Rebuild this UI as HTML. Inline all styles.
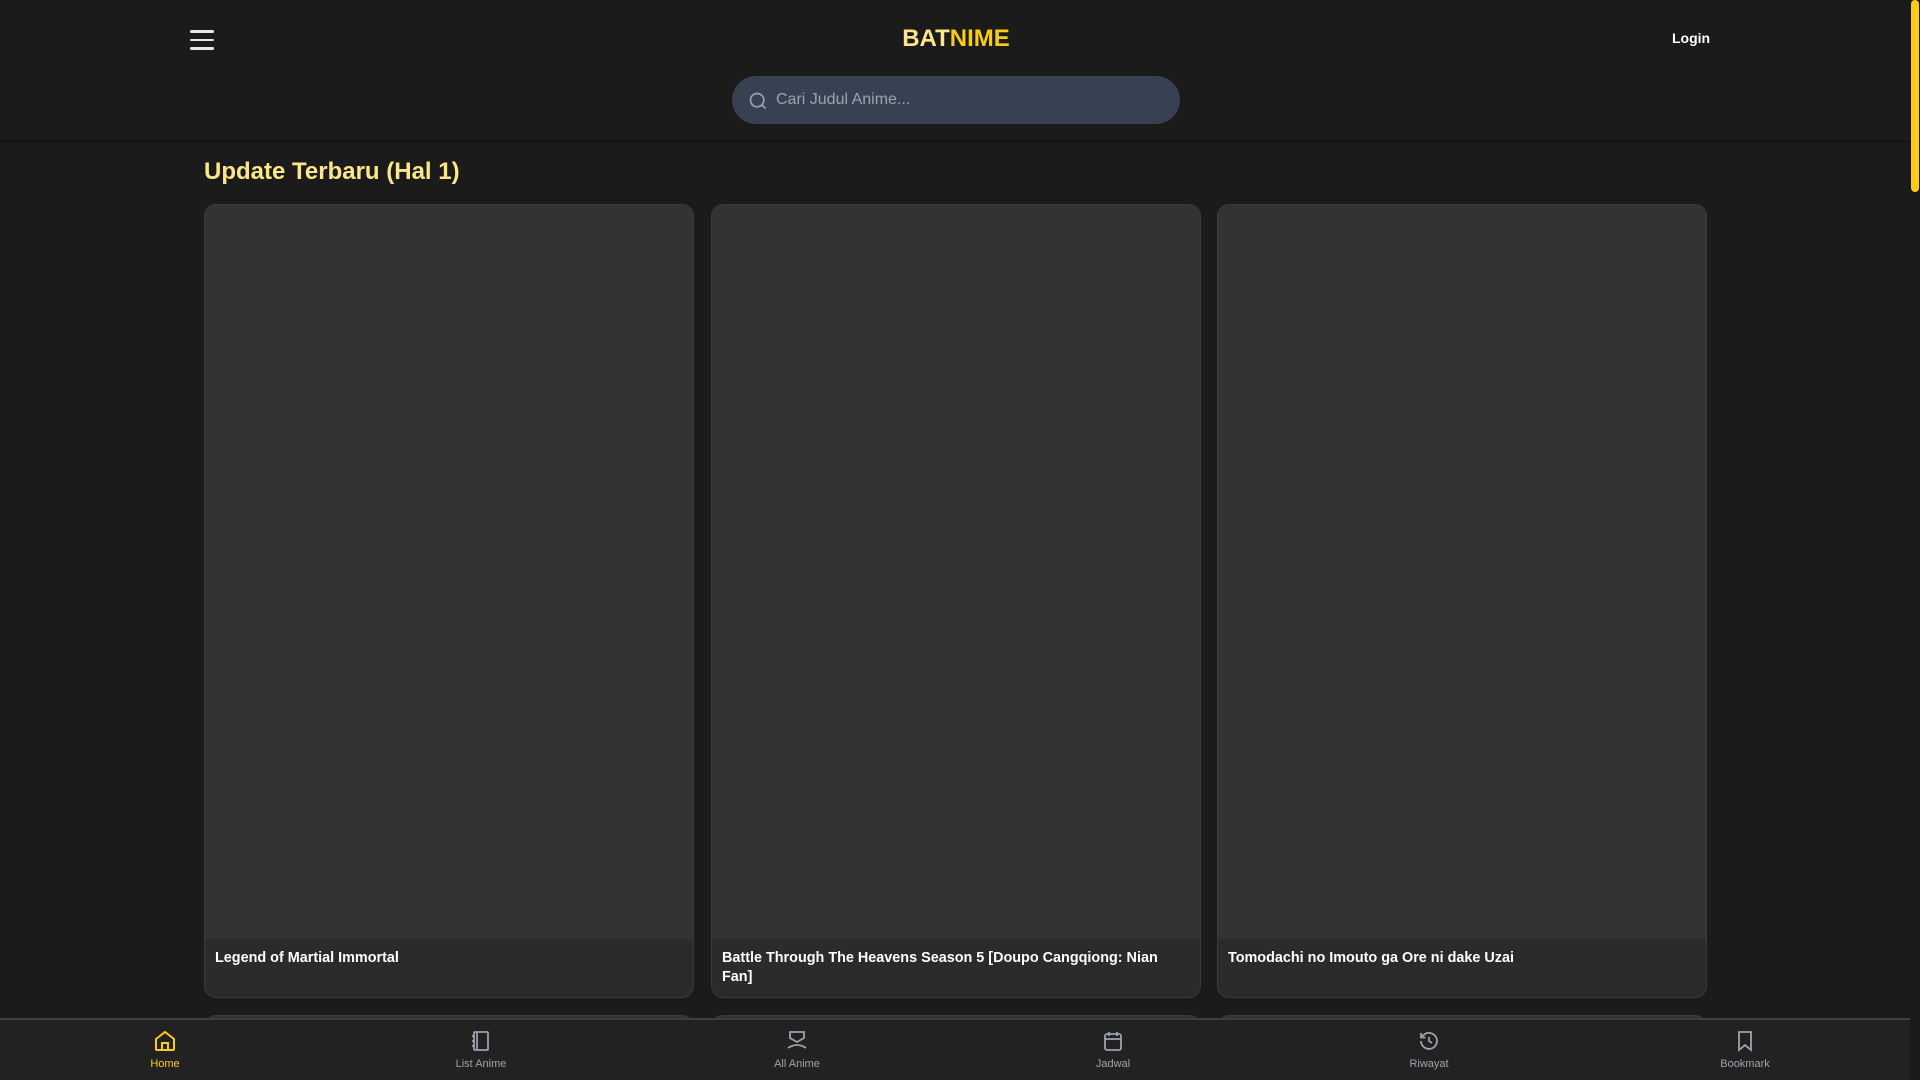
<!DOCTYPE html>
<html><head><meta charset="utf-8"><style>
*{box-sizing:border-box;margin:0;padding:0}
html{width:1920px;height:1080px;overflow:hidden}
body{width:1920px;height:1080px;background:#1b1b1b;font-family:"Liberation Sans",sans-serif;overflow:hidden;position:relative}
.hdr{position:absolute;left:0;top:0;width:1910px;height:143px;background:#1b1b1b;border-bottom:3px solid #151515}
.ham{position:absolute;left:190px;top:30px;width:24px}
.ham i{display:block;height:2.5px;background:#e5e7eb;margin-bottom:6px;border-radius:2px}
.logo{position:absolute;left:0;width:1912px;text-align:center;top:25px;font-size:24px;font-weight:bold;color:#fde68a}
.logo span{color:#facc15}
.login{position:absolute;left:1672px;top:30px;font-size:14px;font-weight:bold;color:#fff}
.search{position:absolute;left:732px;top:76px;width:448px;height:48px;border-radius:24px;background:#374151}
.search .t{position:absolute;left:44px;top:15px;font-size:16px;color:#9ca3af}
.search svg{position:absolute;left:16px;top:15px}
h1{position:absolute;left:204px;top:158px;font-size:24px;color:#fde68a;font-weight:bold}
.card{position:absolute;top:204px;width:490px;height:794px;border:1px solid #3a3a3a;border-radius:12px;background:#2b2b2b;overflow:hidden}
.card .img{height:734px;background:#333}
.card .tt{padding:10px 12px 10px 10px;font-size:14.4px;font-weight:bold;color:#fff;line-height:19px}
.card2{position:absolute;top:1015px;width:490px;height:40px;border:1px solid #3a3a3a;border-radius:12px 12px 0 0;background:#333}
.nav{position:absolute;left:0;top:1018px;width:1910px;height:62px;background:#222;border-top:2px solid #3a3f47;display:flex;padding-left:7px;padding-right:7px}
.nav div{flex:1;text-align:center;color:#9ca3af;font-size:11px;padding-top:9px}
.nav div.a{color:#facc15}
.nav svg{display:block;margin:0 auto 5px}
.sb{position:absolute;left:1910px;top:0;width:10px;height:1080px;background:#1b1b1b}
.sb i{position:absolute;left:1px;top:0;width:8px;height:192px;background:#facc15;border-radius:4px}
</style></head><body>
<div class="hdr">
<div class="ham"><i></i><i></i><i></i></div>
<div class="logo">BAT<span>NIME</span></div>
<div class="login">Login</div>
<div class="search"><svg width="20" height="20" viewBox="0 0 24 24" fill="none" stroke="#9ca3af" stroke-width="2"><circle cx="11" cy="11" r="8"/><path d="M21 21l-4-4"/></svg><div class="t">Cari Judul Anime...</div></div>
</div>
<h1>Update Terbaru (Hal 1)</h1>
<div class="card" style="left:204px"><div class="img"></div><div class="tt">Legend of Martial Immortal</div></div>
<div class="card" style="left:711px"><div class="img"></div><div class="tt">Battle Through The Heavens Season 5 [Doupo Cangqiong: Nian<br>Fan]</div></div>
<div class="card" style="left:1217px"><div class="img"></div><div class="tt">Tomodachi no Imouto ga Ore ni dake Uzai</div></div>
<div class="card2" style="left:204px"></div><div class="card2" style="left:711px"></div><div class="card2" style="left:1217px"></div>
<div class="nav">
<div class="a"><svg width="24" height="24" viewBox="0 0 24 24" fill="none" stroke="#facc15" stroke-width="2"><path d="M3 10l9-7 9 7v10a1 1 0 0 1-1 1H4a1 1 0 0 1-1-1z"/><path d="M9 21v-7h6v7"/></svg>Home</div>
<div><svg width="24" height="24" viewBox="0 0 24 24" fill="none" stroke="#9ca3af" stroke-width="1.8"><rect x="5" y="3" width="14" height="18" rx="1"/><path d="M8 3v18M3 7h3M3 12h3M3 17h3"/></svg>List Anime</div>
<div><svg width="24" height="24" viewBox="0 0 24 24" fill="none" stroke="#9ca3af" stroke-width="1.8"><path d="M5 3h14v6l-7 4-7-4z"/><path d="M3 19q9-6 18 0"/></svg>All Anime</div>
<div><svg width="24" height="24" viewBox="0 0 24 24" fill="none" stroke="#9ca3af" stroke-width="1.8"><rect x="4" y="5" width="16" height="16" rx="2"/><path d="M8 3v4M16 3v4M4 10h16"/></svg>Jadwal</div>
<div><svg width="24" height="24" viewBox="0 0 24 24" fill="none" stroke="#9ca3af" stroke-width="1.8"><path d="M4 12a8 8 0 1 0 2.3-5.7L4 8.5"/><path d="M4 4v4.5h4.5M12 8v4l3 2"/></svg>Riwayat</div>
<div><svg width="24" height="24" viewBox="0 0 24 24" fill="none" stroke="#9ca3af" stroke-width="1.8"><path d="M6 3h12v18l-6-5-6 5z"/></svg>Bookmark</div>
</div>
<div class="sb"><i></i></div>
</body></html>
